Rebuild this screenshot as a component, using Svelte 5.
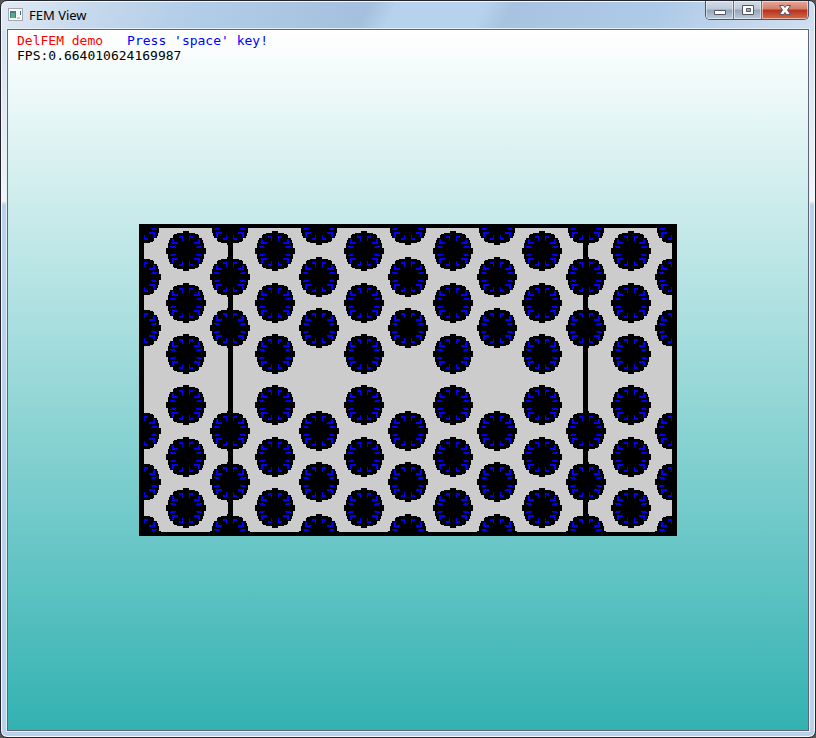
<script>
  const long = [225, 277, 328, 431, 482, 534];
  const mid = [251, 303, 354, 405, 457, 508];
  const cols = [141, 186, 230, 275, 319, 364, 408, 453, 497, 542, 586, 631, 675];
  const discs = cols.flatMap((x, i) => (i % 2 ? mid : long).map((y) => ({ x: x - 139, y: y - 224 })));
  const quarters = ['1 1', '-1 1', '1 -1', '-1 -1'];
</script>

<div class="window">
  <header>
    <svg class="app" width="16" height="14" viewBox="0 0 16 14" shape-rendering="crispEdges" aria-hidden="true">
      <path fill="#a5a9ad" d="M0 0h15v13H0z" /><path fill="#f7f9fa" d="M1 1h13v11H1z" />
      <path fill="#3c7d94" d="M2 3h6v7H2z" /><path fill="#5dab7d" d="M3 5h4v5H3z" />
      <path fill="#2964c8" d="M12 3h1v2h-1z" /><path fill="#2f7a50" d="M12 5h1v2h-1z" /><path fill="#c6cacd" d="M9 9h3v2H9z" />
    </svg>
    <h1>FEM View</h1>
    <div class="controls">
      <button aria-label="Minimize"><svg width="14" height="12" viewBox="0 0 14 12"><path d="M1.500 6.500h11v4h-11z" fill="#fff" stroke="#535666" /></svg></button>
      <button aria-label="Maximize"><svg width="14" height="12" viewBox="0 0 14 12"><path d="M1.500 1.500h11v9h-11zM5.500 4.500v3h4v-3z" fill="#fff" stroke="#535666" fill-rule="evenodd" /></svg></button>
      <button class="close" aria-label="Close"><svg width="14" height="12" viewBox="0 0 14 12"><path d="M1.500 1.500h4L7 3.500l1.500-2h4L9.500 6l3 4.500h-4L7 8.500l-1.500 2h-4L4.500 6z" fill="#fff" stroke="#535666" /></svg></button>
    </div>
  </header>
  <main>
    <div class="log">
      <p><span class="red">DelFEM demo</span><span class="blue">Press 'space' key!</span></p>
      <p>FPS:0.664010624169987</p>
    </div>
    <svg class="mesh" viewBox="0 0 538 312" shape-rendering="crispEdges" role="img" aria-label="Finite element mesh">
      <defs>
        <g id="quarter">
          <path fill="#000" d="M0 0V-20H3V-18H9V-17H12V-16H13V-13H16V-11H17V-8H18V-3H20V0z" />
          <path fill="#00f" d="M3-15h4v2h-3v3h-1zM12-12h2v5h-4v-2h2zM8-9h2v2h-2zM10-4h1v-1h5v1h-1v1h-5z" />
        </g>
        <g id="disc">
          {#each quarters as q}<use href="#quarter" transform="scale({q})" />{/each}
        </g>
      </defs>
      <path fill="#ccc" d="M0 0h538v312H0z" />
      {#each discs as d}<use href="#disc" x={d.x} y={d.y} />{/each}
      <path d="M0 0h5v312H0zM533 0h5v312h-5zM89 0h5v312h-5zM444 0h5v312h-5zM0 0h538v4H0zM0 308h538v4H0z" />
    </svg>
  </main>
</div>

<style>
  :global(body) { background: #555; }
  * { box-sizing: border-box; }
  .window {
    height: 100vh;
    display: flex;
    flex-direction: column;
    padding: 0 6px 6px;
    border: 1px solid #23252e;
    border-radius: 7px;
    box-shadow: inset 0 0 0 1px #f4f9ff;
    background:
      linear-gradient(115deg, #e2eaf4 0, #c7d9ec 80px, #b2cde8 180px, #a5c0dc 335px, #b7d2ed 360px, #b7d2ed 440px, #a8c3df 465px, #adcae6 600px, #c3d6ee 680px, #cfdff0 100%) 0 0 / 100% 30px no-repeat,
      linear-gradient(#d5e1ef 30px, #f2f4f8 200px, #b9d1ea 204px, #b9d1ea);
  }
  header { height: 28px; flex: none; display: flex; align-items: flex-start; }
  .app { margin: 7px 5px 0 1px; }
  h1 { margin: 5px 0 0; font: 13px/18px "Noto Sans", sans-serif; color: #000; }
  .controls {
    display: flex;
    margin-left: auto;
    height: 19px;
    border: 1px solid #4d5565;
    border-top: 0;
    border-radius: 0 0 5px 5px;
    overflow: hidden;
  }
  button {
    width: 28px;
    padding: 0;
    border: 0;
    border-right: 1px solid #667184;
    display: flex;
    align-items: center;
    justify-content: center;
    box-shadow: inset 0 0 0 1px #ffffff80;
    background: linear-gradient(#d4dce7, #bdc8d7 45%, #94a3b7 50%, #bccbdc);
  }
  .close {
    width: 46px;
    border: 0;
    background: linear-gradient(#e6aa99, #d57b69 45%, #b5301b 50%, #d36c4a);
  }
  main {
    flex: 1;
    min-height: 0;
    display: grid;
    border: 1px solid #5d6674;
    outline: 1px solid #e4effa;
    background: linear-gradient(#fff, #33b2b2);
  }
  .log { grid-area: 1 / 1; padding: 3px 9px 0; font: 13px/15px "DejaVu Sans Mono", monospace; }
  p { margin: 0; display: flex; gap: 24px; }
  .red { color: #f00; }
  .blue { color: #00f; }
  .mesh { grid-area: 1 / 1; display: block; width: 67.25%; margin: auto; overflow: hidden; }
</style>
